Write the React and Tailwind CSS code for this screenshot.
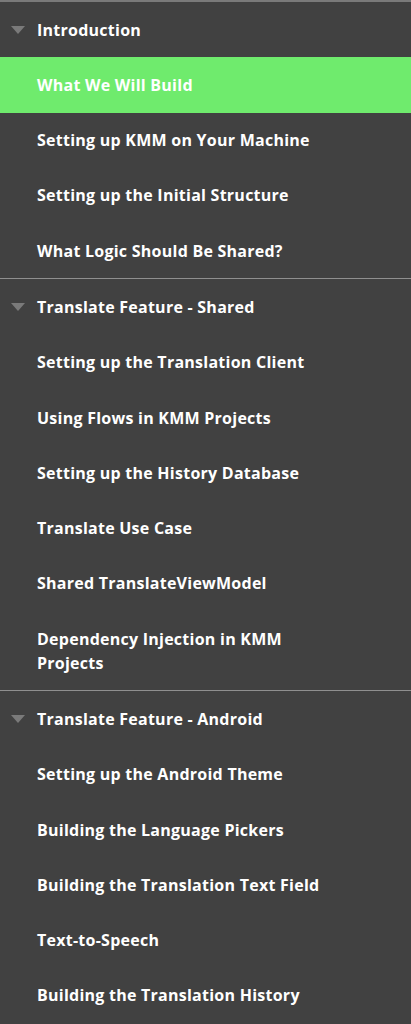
const sections = [
  {
    title: 'Introduction',
    items: ['What We Will Build', 'Setting up KMM on Your Machine', 'Setting up the Initial Structure', 'What Logic Should Be Shared?'],
  },
  {
    title: 'Translate Feature - Shared',
    items: [
      'Setting up the Translation Client',
      'Using Flows in KMM Projects',
      'Setting up the History Database',
      'Translate Use Case',
      'Shared TranslateViewModel',
      'Dependency Injection in KMM Projects',
    ],
  },
  {
    title: 'Translate Feature - Android',
    items: [
      'Setting up the Android Theme',
      'Building the Language Pickers',
      'Building the Translation Text Field',
      'Text-to-Speech',
      'Building the Translation History',
    ],
  },
];

const active = 'What We Will Build';

export default function App() {
  return (
    <div className="w-[411px] h-[1024px] overflow-hidden bg-[#414141] border-t-2 border-[#7a7a7a] font-['Open_Sans',sans-serif] text-white">
      {sections.map((s, i) => (
        <div key={s.title} className={i > 0 ? 'border-t border-[#8f8f8f]' : ''}>
          <div className="flex items-center py-[15.65px]">
            <svg width="14" height="8" viewBox="0 0 14 8" className="ml-[11px] mr-[12px] shrink-0">
              <path d="M0 0 L14 0 L7 8 Z" fill="#7a7a7a" />
            </svg>
            <span className="text-[16px] leading-6 font-bold tracking-[0.25px]">{s.title}</span>
          </div>
          {s.items.map(item => (
            <div
              key={item}
              className={`py-[15.65px] pl-[37px] pr-[60px] ${item === active ? 'bg-[#6feb6d]' : ''}`}
            >
              <span className="block text-[16px] leading-6 font-bold tracking-[0.25px]">{item}</span>
            </div>
          ))}
        </div>
      ))}
    </div>
  );
}
